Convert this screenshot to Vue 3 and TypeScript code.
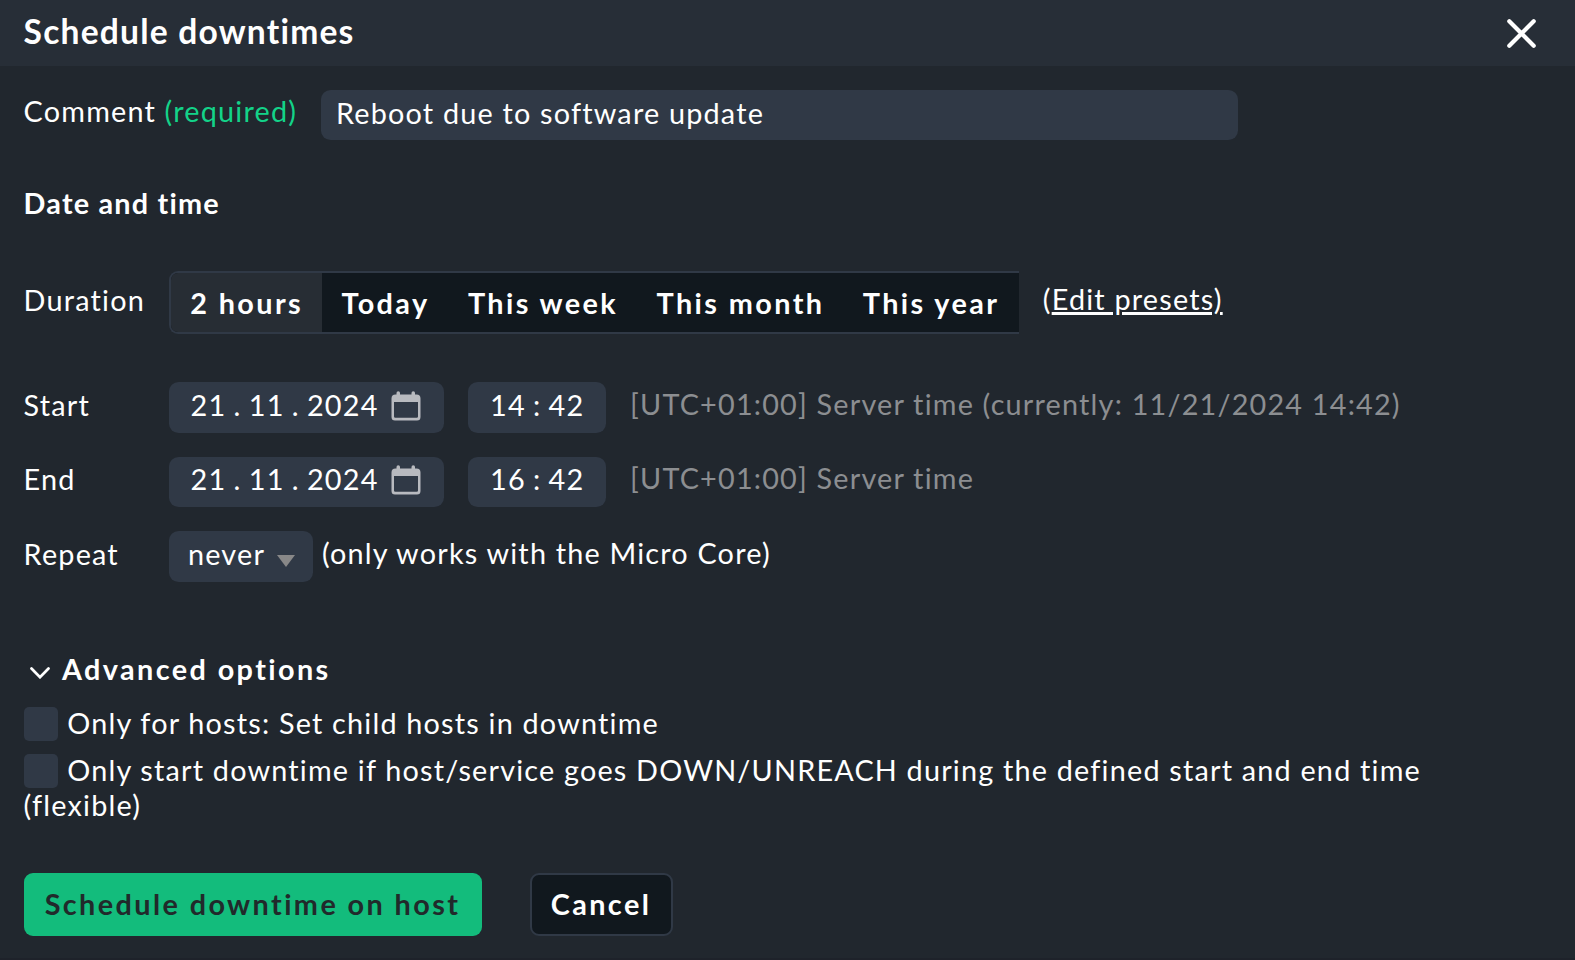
<script setup lang="ts">
import { ref } from 'vue'

interface Moment {
  label: string
  day: string
  month: string
  year: string
  hour: string
  minute: string
  note: string
}

const comment = ref('Reboot due to software update')
const presets: string[] = ['2 hours', 'Today', 'This week', 'This month', 'This year']
const selected = ref(0)
const moments: Moment[] = [
  { label: 'Start', day: '21', month: '11', year: '2024', hour: '14', minute: '42', note: '[UTC+01:00] Server time (currently: 11/21/2024 14:42)' },
  { label: 'End', day: '21', month: '11', year: '2024', hour: '16', minute: '42', note: '[UTC+01:00] Server time' },
]
const options: string[] = [
  'Only for hosts: Set child hosts in downtime',
  'Only start downtime if host/service goes DOWN/UNREACH during the defined start and end time (flexible)',
]
const checked = ref<boolean[]>([false, false])
</script>

<template>
  <section class="dialog">
    <header class="head">
      <h1>Schedule downtimes</h1>
      <button class="close" aria-label="Close">
        <svg viewBox="0 0 30 30" width="30" height="30"><path d="M2.300 2.300 26.700 26.700M26.700 2.300 2.300 26.700" /></svg>
      </button>
    </header>

    <div class="row comment">
      <label>Comment <span class="req">(required)</span></label>
      <input v-model="comment" class="field" type="text" />
    </div>

    <h2>Date and time</h2>

    <div class="row duration">
      <span class="label">Duration</span>
      <div class="group">
        <button v-for="(p, i) in presets" :key="p" :class="{ on: i === selected }" @click="selected = i">{{ p }}</button>
      </div>
      <span class="edit">(<a>Edit presets)</a></span>
    </div>

    <div v-for="m in moments" :key="m.label" class="row moment">
      <span class="label">{{ m.label }}</span>
      <div class="field date">
        <span>{{ m.day }}</span><span class="dot">.</span><span>{{ m.month }}</span><span class="dot">.</span><span>{{ m.year }}</span>
        <svg class="cal" viewBox="0 0 30 30" width="30" height="30">
          <path fill-rule="evenodd" d="M5.500 3.500V2a1.750 1.750 0 0 1 3.500 0v1.500h11.500V2a1.750 1.750 0 0 1 3.500 0v1.500h1.500a4 4 0 0 1 4 4V26a3.500 3.500 0 0 1-3.500 3.500H4A3.500 3.500 0 0 1 .5 26V7.500a4 4 0 0 1 4-4zM3 11v14.500a1.300 1.300 0 0 0 1.300 1.300h21.400a1.300 1.300 0 0 0 1.300-1.300V11z" />
        </svg>
      </div>
      <div class="field time">
        <span>{{ m.hour }}</span><span class="colon">:</span><span>{{ m.minute }}</span>
      </div>
      <span class="note">{{ m.note }}</span>
    </div>

    <div class="row repeat">
      <span class="label">Repeat</span>
      <div class="field select">
        <span>never</span>
        <svg viewBox="0 0 18 12" width="18" height="12"><path d="M0 0h18L9 12z" /></svg>
      </div>
      <span class="hint">(only works with the Micro Core)</span>
    </div>

    <div class="advanced">
      <svg viewBox="0 0 20 12" width="20" height="12"><path d="M1.500 1.500 10 10.200l8.500-8.700" /></svg>
      <span>Advanced options</span>
    </div>

    <div v-for="(o, i) in options" :key="o" class="option">
      <span class="box" role="checkbox" :aria-checked="checked[i]" @click="checked[i] = !checked[i]"></span>{{ o }}
    </div>

    <footer class="actions">
      <button class="primary">Schedule downtime on host</button>
      <button class="cancel">Cancel</button>
    </footer>
  </section>
</template>

<style>
body {
  background: #21272e;
}
</style>

<style scoped>
.dialog {
  box-sizing: border-box;
  width: 1575px;
  height: 960px;
  overflow: hidden;
  background: #21272e;
  border-bottom: 2px solid #1e222a;
  color: #fff;
  font: 28.8px/34px Lato, "Liberation Sans", sans-serif;
  letter-spacing: 1.2px;
}
button {
  border: 0;
  margin: 0;
  padding: 0;
  background: none;
  color: inherit;
  font: inherit;
  font-weight: 700;
  letter-spacing: 2.4px;
  white-space: nowrap;
}
.head {
  display: flex;
  justify-content: space-between;
  height: 66px;
  box-sizing: border-box;
  padding: 11px 38px 0 23.6px;
  background: #272e37;
}
h1 {
  margin: 0;
  font-size: 33.6px;
  line-height: 40px;
}
.close {
  height: 30px;
  margin-top: 8px;
}
.close svg {
  display: block;
  fill: none;
  stroke: #fff;
  stroke-width: 4.2;
  stroke-linecap: round;
}
.row {
  display: flex;
  align-items: flex-start;
  padding-left: 23.6px;
  white-space: nowrap;
}
.field {
  box-sizing: border-box;
  height: 50.4px;
  border: 0;
  border-radius: 9.6px;
  background: #303946;
}
.label {
  width: 145.4px;
}
.comment {
  padding-top: 24px;
}
.comment label {
  width: 297.4px;
  padding-top: 4px;
}
.req {
  color: #13d389;
}
.comment input {
  width: 917px;
  height: 50px;
  padding: 0 15px 4px;
  color: #fff;
  font: inherit;
  letter-spacing: inherit;
  outline: none;
}
h2 {
  margin: 46px 0 0 23.6px;
  font-size: 28.8px;
  line-height: 34px;
}
.duration {
  margin-top: 51px;
}
.duration .label {
  padding-top: 12px;
}
.group {
  display: flex;
  box-sizing: border-box;
  width: 850px;
  height: 63px;
  border: 2px solid #303946;
  border-right: 0;
  border-radius: 9px 0 0 9px;
  overflow: hidden;
  background: #11181e;
}
.group button {
  padding: 1px 19.2px 0 19.2px;
}
.group .on {
  background: #272d34;
}
.edit {
  margin-left: 23.8px;
  padding-top: 11px;
}
.edit a {
  text-decoration: underline;
  text-decoration-thickness: 3px;
}
.moment {
  margin-top: 24px;
}
.duration + .moment {
  margin-top: 48.2px;
}
.moment .label,
.repeat .label {
  padding-top: 5.8px;
}
.date {
  display: flex;
  width: 275px;
  margin-right: 24px;
  padding: 5.8px 0 0 21.6px;
}
.dot {
  padding: 0 7.2px;
}
.cal {
  margin: 2.7px 0 0 12.4px;
  fill: #b8babf;
}
.time {
  display: flex;
  width: 138px;
  margin-right: 24px;
  padding: 5.8px 0 0 22px;
}
.colon {
  padding: 0 7.2px;
}
.note {
  padding-top: 4.8px;
  color: #8c8e91;
}
.repeat {
  margin-top: 24px;
}
.select {
  display: flex;
  width: 144px;
  height: 51px;
  margin-right: 9px;
  padding: 6px 0 0 19px;
}
.select svg {
  margin: 18px 0 0 12px;
  fill: #888;
}
.hint {
  padding-top: 5px;
}
.advanced {
  display: flex;
  margin: 70px 0 20px 30.2px;
  font-weight: 700;
  letter-spacing: 2.4px;
}
.advanced svg {
  margin: 15px 11.8px 0 0;
  fill: none;
  stroke: #fff;
  stroke-width: 2.7;
  stroke-linecap: round;
}
.option {
  padding: 0 120px 0 23.6px;
  margin-bottom: 12px;
  line-height: 35px;
}
.box {
  display: inline-block;
  width: 34px;
  height: 34px;
  margin-right: 9.6px;
  border-radius: 5px;
  background: #303946;
  vertical-align: -7px;
}
.actions {
  display: flex;
  gap: 48px;
  margin: 50px 0 0 24px;
}
.primary,
.cancel {
  box-sizing: border-box;
  height: 63px;
  padding: 0;
  border-radius: 9px;
}
.primary {
  width: 458px;
  padding-right: 1px;
  background: #13bc7c;
  color: #212a2b;
}
.cancel {
  width: 143px;
  padding-right: 1px;
  border: 2px solid #303946;
  background: #11181e;
}
</style>
